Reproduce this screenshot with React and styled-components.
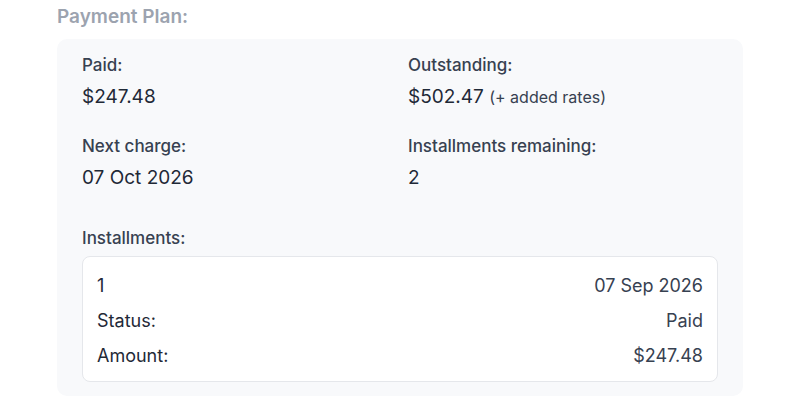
import React from "react";
import styled, { createGlobalStyle } from "styled-components";

const GlobalStyle = createGlobalStyle`
  body {
    margin: 0;
    background: #ffffff;
    font-family: Inter, "Noto Sans", "Liberation Sans", sans-serif;
    color: #1f2937;
  }
`;

const Page = styled.div`
  width: 800px;
  height: 400px;
  padding: 5px 57px 0;
  box-sizing: border-box;
  overflow: hidden;
`;

const Heading = styled.h3`
  margin: 0 0 10px;
  font-size: 19px;
  line-height: 24px;
  font-weight: 600;
  color: #9ca3af;
`;

const Panel = styled.div`
  background: #f8f9fb;
  border-radius: 10px;
  padding: 15px 25px 14px;
`;

const Grid = styled.div`
  display: grid;
  grid-template-columns: 1fr 1fr;
  column-gap: 16px;
  row-gap: 26px;
`;

const Field = styled.div`
  display: flex;
  flex-direction: column;
  gap: 9px;
`;

const Label = styled.div`
  font-size: 17px;
  line-height: 22px;
  font-weight: 500;
  color: #374151;
`;

const Value = styled.div`
  font-size: 19px;
  line-height: 24px;
  color: #1f2937;
`;

const Note = styled.span`
  font-size: 16px;
  color: #374151;
`;

const Section = styled.div`
  margin-top: 37px;
`;

const Card = styled.div`
  margin-top: 7px;
  background: #ffffff;
  border: 1px solid #e5e7eb;
  border-radius: 8px;
  padding: 17px 14px 13px;
  display: flex;
  flex-direction: column;
  gap: 11px;
`;

const Row = styled.div`
  display: flex;
  justify-content: space-between;
  font-size: 18px;
  line-height: 24px;
  color: #1f2937;
`;

const Right = styled.span`
  color: #374151;
`;

export default function App() {
  return (
    <>
      <GlobalStyle />
      <Page>
        <Heading>Payment Plan:</Heading>
        <Panel>
          <Grid>
            <Field>
              <Label>Paid:</Label>
              <Value>$247.48</Value>
            </Field>
            <Field>
              <Label>Outstanding:</Label>
              <Value>
                $502.47 <Note>(+ added rates)</Note>
              </Value>
            </Field>
            <Field>
              <Label>Next charge:</Label>
              <Value>07 Oct 2026</Value>
            </Field>
            <Field>
              <Label>Installments remaining:</Label>
              <Value>2</Value>
            </Field>
          </Grid>
          <Section>
            <Label>Installments:</Label>
            <Card>
              <Row>
                <span>1</span>
                <Right>07 Sep 2026</Right>
              </Row>
              <Row>
                <span>Status:</span>
                <Right>Paid</Right>
              </Row>
              <Row>
                <span>Amount:</span>
                <Right>$247.48</Right>
              </Row>
            </Card>
          </Section>
        </Panel>
      </Page>
    </>
  );
}
